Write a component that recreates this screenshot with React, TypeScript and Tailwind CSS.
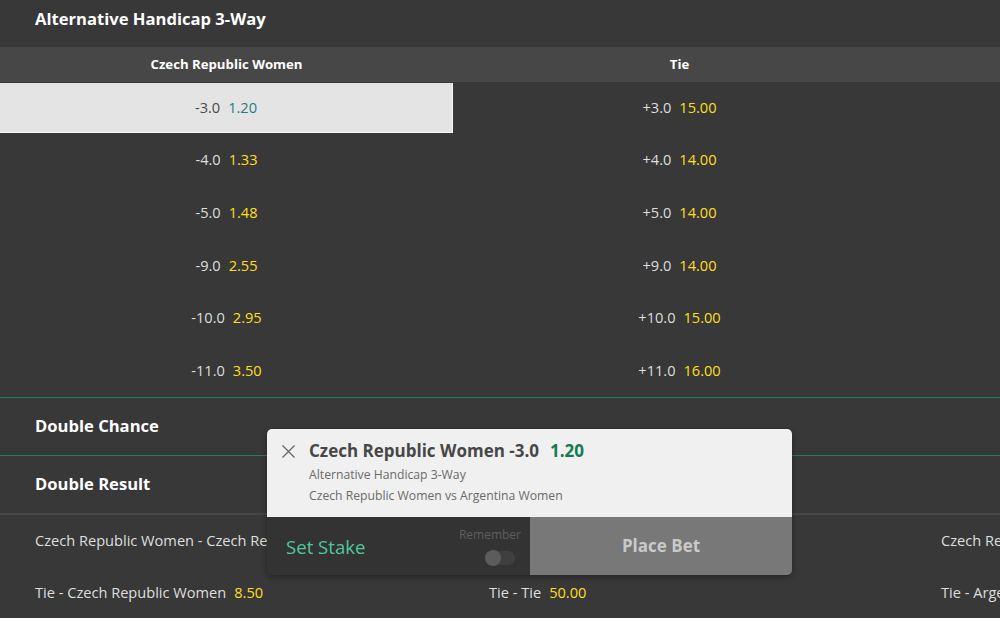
import React from "react";

const font = { fontFamily: '"Open Sans", "Noto Sans", Arial, sans-serif' };

const rows: [string, string, string, string][] = [
  ["-3.0", "1.20", "+3.0", "15.00"],
  ["-4.0", "1.33", "+4.0", "14.00"],
  ["-5.0", "1.48", "+5.0", "14.00"],
  ["-9.0", "2.55", "+9.0", "14.00"],
  ["-10.0", "2.95", "+10.0", "15.00"],
  ["-11.0", "3.50", "+11.0", "16.00"],
];

function Cell({ h, o, selected }: { h: string; o: string; selected?: boolean }) {
  return (
    <div
      className={
        "flex h-full items-center justify-center gap-[8px] text-[14.6px] " +
        (selected ? "bg-[#e4e4e4] border-r border-b border-[#f7f7f7]" : "")
      }
    >
      <span className={selected ? "text-[#4a4a4a]" : "text-[#dedede]"}>{h}</span>
      <span className={selected ? "text-[#23807a]" : "text-[#ffdf1b]"}>{o}</span>
    </div>
  );
}

export default function App() {
  return (
    <div className="relative w-[1000px] h-[618px] overflow-hidden bg-[#383838]" style={font}>
      <div className="w-[1359px]">
        {/* Alternative Handicap */}
        <div className="h-[47px] flex items-center pl-[35px] pb-[8px]">
          <span className="text-[16.6px] font-bold text-white">Alternative Handicap 3-Way</span>
        </div>
        <div className="grid grid-cols-[453px_453px_453px] h-[35px] bg-[#474747] text-[13.2px] font-bold text-white">
          <div className="flex items-center justify-center pt-[1px]">Czech Republic Women</div>
          <div className="flex items-center justify-center pt-[1px]">Tie</div>
          <div className="flex items-center justify-center pt-[1px]">Argentina Women</div>
        </div>
        <div className="grid grid-cols-[453px_453px_453px]">
          {rows.map((r, i) => (
            <React.Fragment key={i}>
              <div className={i === 0 ? "h-[51px] pt-[1px]" : "h-[52.8px] pt-[1px]"}>
                <Cell h={r[0]} o={r[1]} selected={i === 0} />
              </div>
              <div className={i === 0 ? "h-[51px] pt-[1px]" : "h-[52.8px] pt-[1px]"}>
                <Cell h={r[2]} o={r[3]} />
              </div>
              <div className={i === 0 ? "h-[51px]" : "h-[52.8px]"} />
            </React.Fragment>
          ))}
        </div>
        <div className="h-px bg-[#2a7a5d]" />
        <div className="h-[57px] flex items-center pl-[35px]">
          <span className="text-[16.6px] font-bold text-white">Double Chance</span>
        </div>
        <div className="h-px bg-[#2a7a5d]" />
        <div className="h-[57px] flex items-center pl-[35px]">
          <span className="text-[16.6px] font-bold text-white">Double Result</span>
        </div>
        <div className="h-[2px] bg-[#464646]" />
        <div className="grid grid-cols-[453px_453px_453px] text-[14.6px] text-[#dedede]">
          <div className="h-[52px] flex items-center pl-[35px] gap-[8px]">
            <span>Czech Republic Women - Czech Republic Women</span>
            <span className="text-[#ffdf1b]">1.20</span>
          </div>
          <div className="h-[52px] flex items-center pl-[36px] gap-[8px]">
            <span>Czech Republic Women - Tie</span>
            <span className="text-[#ffdf1b]">26.00</span>
          </div>
          <div className="h-[52px] flex items-center pl-[35px] gap-[8px]">
            <span>Czech Republic Women - Argentina Women</span>
            <span className="text-[#ffdf1b]">34.00</span>
          </div>
          <div className="h-[52px] flex items-center pl-[35px] gap-[8px]">
            <span>Tie - Czech Republic Women</span>
            <span className="text-[#ffdf1b]">8.50</span>
          </div>
          <div className="h-[52px] flex items-center pl-[36px] gap-[8px]">
            <span>Tie - Tie</span>
            <span className="text-[#ffdf1b]">50.00</span>
          </div>
          <div className="h-[52px] flex items-center pl-[35px] gap-[8px]">
            <span>Tie - Argentina Women</span>
            <span className="text-[#ffdf1b]">26.00</span>
          </div>
        </div>
      </div>

      {/* Bet slip popup */}
      <div className="absolute left-[267px] top-[429px] w-[525px] rounded-[5px] overflow-hidden shadow-[0_2px_6px_rgba(0,0,0,0.35)]">
        <div className="h-[88px] bg-[#f0f0f0] flex">
          <div className="w-[42px] pt-[14px] flex justify-center">
            <svg width="15" height="15" viewBox="0 0 15 15" className="mt-[1px] ml-[1px]">
              <path d="M1.5 1.5 L13.5 13.5 M13.5 1.5 L1.5 13.5" stroke="#666" strokeWidth="1.3" fill="none" />
            </svg>
          </div>
          <div className="pt-[10px]">
            <div className="flex items-baseline gap-[11px] leading-[24px]">
              <span className="text-[17px] font-bold text-[#474747]">Czech Republic Women -3.0</span>
              <span className="text-[17px] font-bold text-[#137a52]">1.20</span>
            </div>
            <div className="text-[12.2px] text-[#6a6a6a] leading-[21px] mt-[1px]">Alternative Handicap 3-Way</div>
            <div className="text-[12.2px] text-[#6a6a6a] leading-[21px]">Czech Republic Women vs Argentina Women</div>
          </div>
        </div>
        <div className="h-[58px] flex">
          <div className="w-[263px] bg-[#333333] flex items-center justify-between pl-[19px] pr-[9px]">
            <span className="text-[18.6px] text-[#4fc69d] mt-[2px]">Set Stake</span>
            <div className="flex flex-col items-end gap-[9px] mt-[1px]">
              <span className="text-[12px] text-[#5e5e5e] leading-[14px]">Remember</span>
              <div className="relative w-[30px] h-[14px] rounded-full bg-[#3f3f3f] mr-[6px]">
                <div className="absolute left-0 top-[-1px] w-[16px] h-[16px] rounded-full bg-[#5c5c5c]" />
              </div>
            </div>
          </div>
          <div className="flex-1 bg-[#787878] flex items-center justify-center">
            <span className="text-[17px] font-bold text-[#c9c9c9]">Place Bet</span>
          </div>
        </div>
      </div>
    </div>
  );
}
